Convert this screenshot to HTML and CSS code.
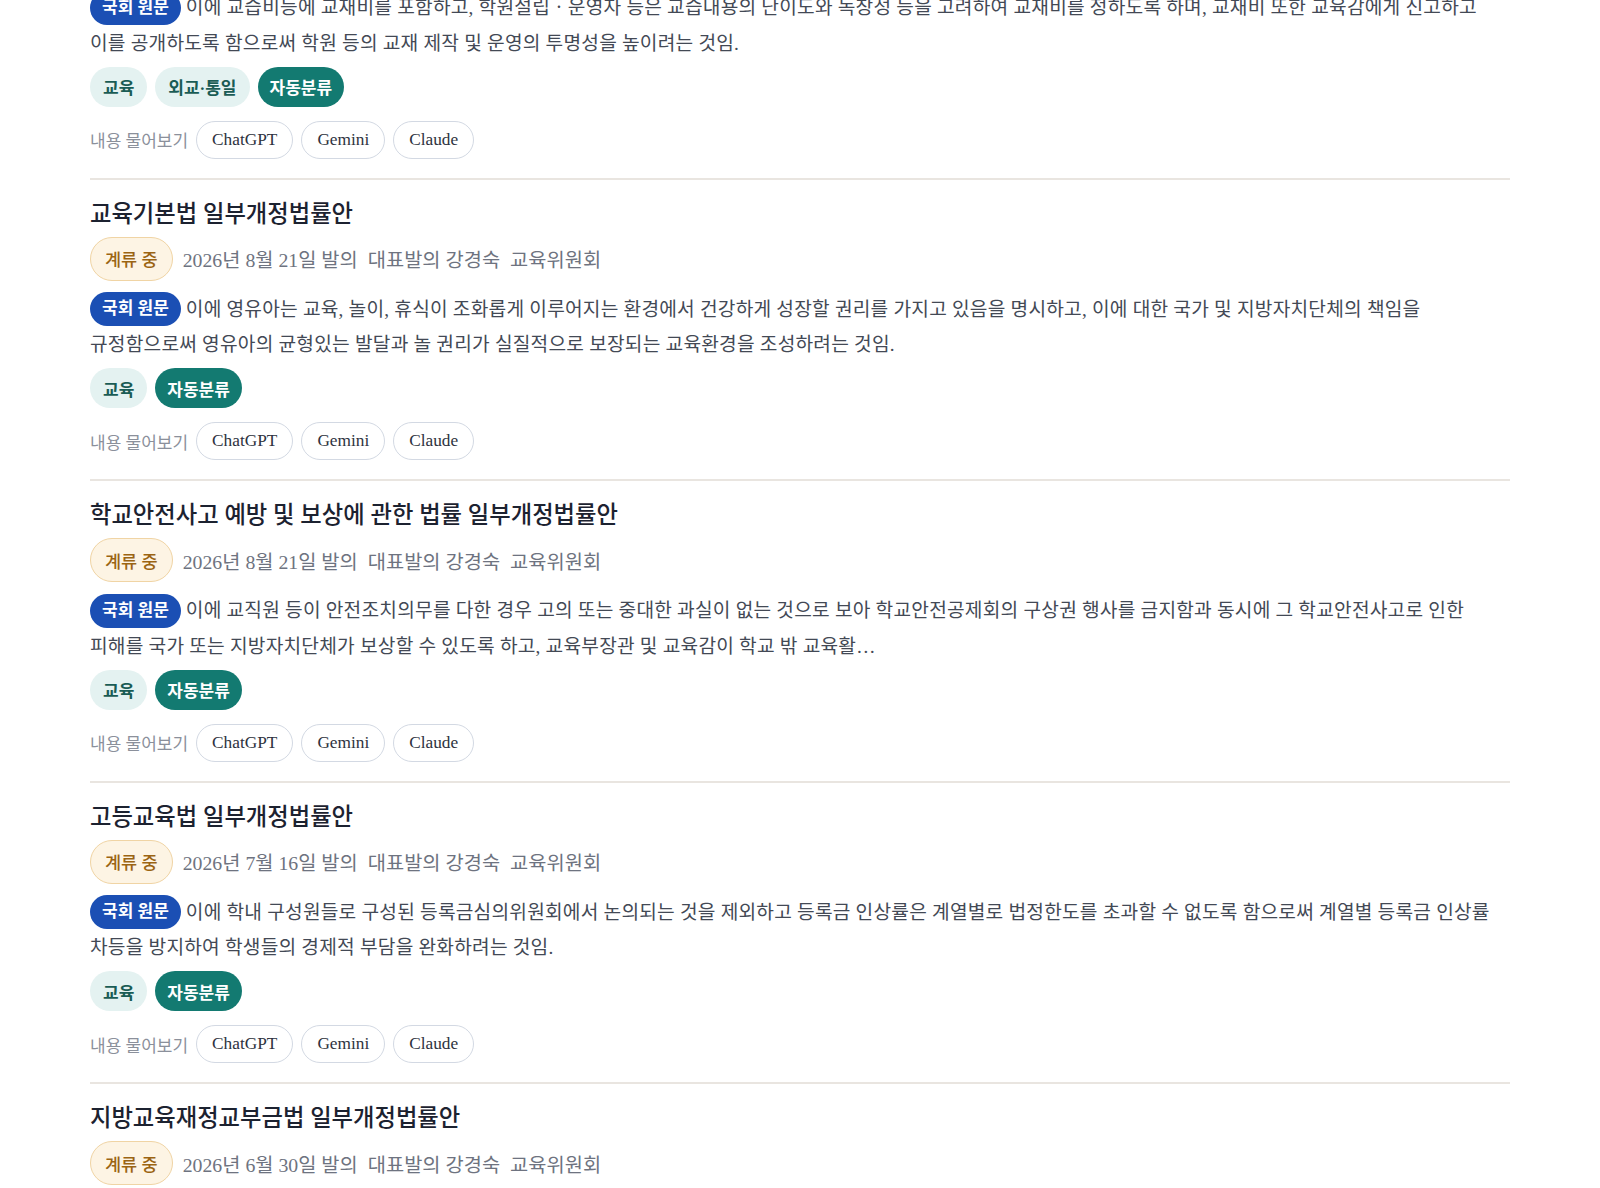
FILE: index.html
```html
<!DOCTYPE html>
<html lang="ko">
<head>
<meta charset="utf-8">
<title>법률안 목록</title>
<link rel="stylesheet" href="styles.css">
</head>
<body>
<main class="feed">
  <article class="bill">
    <h2 class="bill-title">학원의 설립·운영 및 과외교습에 관한 법률 일부개정법률안</h2>
    <div class="bill-meta"><span class="status">계류 중</span><span>2026년 8월 22일 발의</span><span>대표발의 강경숙</span><span>교육위원회</span></div>
    <p class="summary"><span class="src">국회 원문</span> 이에 교습비등에 교재비를 포함하고, 학원설립ㆍ운영자 등은 교습내용의 난이도와 독창성 등을 고려하여 교재비를 정하도록 하며, 교재비 또한 교육감에게 신고하고 이를 공개하도록 함으로써 학원 등의 교재 제작 및 운영의 투명성을 높이려는 것임.</p>
    <div class="tags"><span class="tag">교육</span><span class="tag">외교·통일</span><span class="tag tag-auto">자동분류</span></div>
    <div class="ask"><span class="ask-label">내용 물어보기</span><button class="ask-btn">ChatGPT</button><button class="ask-btn">Gemini</button><button class="ask-btn">Claude</button></div>
  </article>

  <article class="bill">
    <h2 class="bill-title">교육기본법 일부개정법률안</h2>
    <div class="bill-meta"><span class="status">계류 중</span><span>2026년 8월 21일 발의</span><span>대표발의 강경숙</span><span>교육위원회</span></div>
    <p class="summary"><span class="src">국회 원문</span> 이에 영유아는 교육, 놀이, 휴식이 조화롭게 이루어지는 환경에서 건강하게 성장할 권리를 가지고 있음을 명시하고, 이에 대한 국가 및 지방자치단체의 책임을 규정함으로써 영유아의 균형있는 발달과 놀 권리가 실질적으로 보장되는 교육환경을 조성하려는 것임.</p>
    <div class="tags"><span class="tag">교육</span><span class="tag tag-auto">자동분류</span></div>
    <div class="ask"><span class="ask-label">내용 물어보기</span><button class="ask-btn">ChatGPT</button><button class="ask-btn">Gemini</button><button class="ask-btn">Claude</button></div>
  </article>

  <article class="bill">
    <h2 class="bill-title">학교안전사고 예방 및 보상에 관한 법률 일부개정법률안</h2>
    <div class="bill-meta"><span class="status">계류 중</span><span>2026년 8월 21일 발의</span><span>대표발의 강경숙</span><span>교육위원회</span></div>
    <p class="summary"><span class="src">국회 원문</span> 이에 교직원 등이 안전조치의무를 다한 경우 고의 또는 중대한 과실이 없는 것으로 보아 학교안전공제회의 구상권 행사를 금지함과 동시에 그 학교안전사고로 인한 피해를 국가 또는 지방자치단체가 보상할 수 있도록 하고, 교육부장관 및 교육감이 학교 밖 교육활…</p>
    <div class="tags"><span class="tag">교육</span><span class="tag tag-auto">자동분류</span></div>
    <div class="ask"><span class="ask-label">내용 물어보기</span><button class="ask-btn">ChatGPT</button><button class="ask-btn">Gemini</button><button class="ask-btn">Claude</button></div>
  </article>

  <article class="bill">
    <h2 class="bill-title">고등교육법 일부개정법률안</h2>
    <div class="bill-meta"><span class="status">계류 중</span><span>2026년 7월 16일 발의</span><span>대표발의 강경숙</span><span>교육위원회</span></div>
    <p class="summary"><span class="src">국회 원문</span> 이에 학내 구성원들로 구성된 등록금심의위원회에서 논의되는 것을 제외하고 등록금 인상률은 계열별로 법정한도를 초과할 수 없도록 함으로써 계열별 등록금 인상률 차등을 방지하여 학생들의 경제적 부담을 완화하려는 것임.</p>
    <div class="tags"><span class="tag">교육</span><span class="tag tag-auto">자동분류</span></div>
    <div class="ask"><span class="ask-label">내용 물어보기</span><button class="ask-btn">ChatGPT</button><button class="ask-btn">Gemini</button><button class="ask-btn">Claude</button></div>
  </article>

  <article class="bill">
    <h2 class="bill-title">지방교육재정교부금법 일부개정법률안</h2>
    <div class="bill-meta"><span class="status">계류 중</span><span>2026년 6월 30일 발의</span><span>대표발의 강경숙</span><span>교육위원회</span></div>
    <p class="summary"><span class="src">국회 원문</span> 이에 특수학교 및 특수학급의 운영에 필요한 경비를 보통교부금 산정 시 별도로 반영하도록 하고, 교육감이 특수교육 여건 개선을 위한 재원을 안정적으로 확보할 수 있도록 함으로써 특수교육 대상 학생의 교육받을 권리를 실질적으로 보장하려는 것임.</p>
    <div class="tags"><span class="tag">교육</span><span class="tag tag-auto">자동분류</span></div>
    <div class="ask"><span class="ask-label">내용 물어보기</span><button class="ask-btn">ChatGPT</button><button class="ask-btn">Gemini</button><button class="ask-btn">Claude</button></div>
  </article>
</main>
</body>
</html>
```

FILE: styles.css
```css
html, body {
  margin: 0;
  padding: 0;
  background: #ffffff;
}

body {
  font-family: "Liberation Serif", "Noto Sans CJK KR", serif;
  color: #434955;
  word-break: keep-all;
}

.feed {
  width: 1420px;
  margin: -124px 0 0 90px;
}

.bill {
  border-top: 2px solid #e9e5e0;
  padding: 18px 0 19px;
  display: flex;
  flex-direction: column;
  align-items: flex-start;
}

.bill-title {
  margin: 0;
  font-size: 23.3px;
  line-height: 32px;
  font-weight: 500;
  color: #1c2230;
}

.bill-meta {
  margin-top: 7px;
  display: flex;
  align-items: center;
  gap: 10px;
  font-size: 19.8px;
  color: #6e7380;
}

.status {
  display: inline-flex;
  align-items: center;
  height: 44px;
  box-sizing: border-box;
  padding: 0 14px;
  border: 1px solid #f0d4a4;
  border-radius: 22px;
  background: #fdf4e4;
  color: #9b6413;
  font-size: 17.5px;
  font-weight: 500;
}

.summary {
  margin: 12px 0 0;
  font-size: 19.2px;
  letter-spacing: 0.2px;
  line-height: 33px;
  color: #434955;
}

.src {
  display: inline-block;
  height: 34px;
  line-height: 34px;
  padding: 0 12px;
  border-radius: 17px;
  background: #1b4fb4;
  color: #ffffff;
  font-size: 17px;
  font-weight: 700;
  letter-spacing: 0;
  vertical-align: middle;
  position: relative;
  top: -2px;
}

.tags {
  margin-top: 7px;
  display: flex;
  gap: 8px;
}

.tag {
  display: inline-flex;
  align-items: center;
  height: 40px;
  padding: 0 13px;
  border-radius: 20px;
  background: #e4f2f1;
  color: #1a5c55;
  font-size: 17px;
  font-weight: 700;
}

.tag-auto {
  background: #137a71;
  color: #ffffff;
  padding: 0 12px;
}

.ask {
  margin-top: 14px;
  display: flex;
  align-items: center;
  gap: 8px;
}

.ask-label {
  font-size: 17px;
  color: #8b909b;
}

.ask-btn {
  height: 38px;
  padding: 0 15px;
  border: 1px solid #d3d9e3;
  border-radius: 19px;
  background: #ffffff;
  font-family: "Liberation Serif", serif;
  font-size: 17.3px;
  color: #2e3340;
  cursor: pointer;
}
```
